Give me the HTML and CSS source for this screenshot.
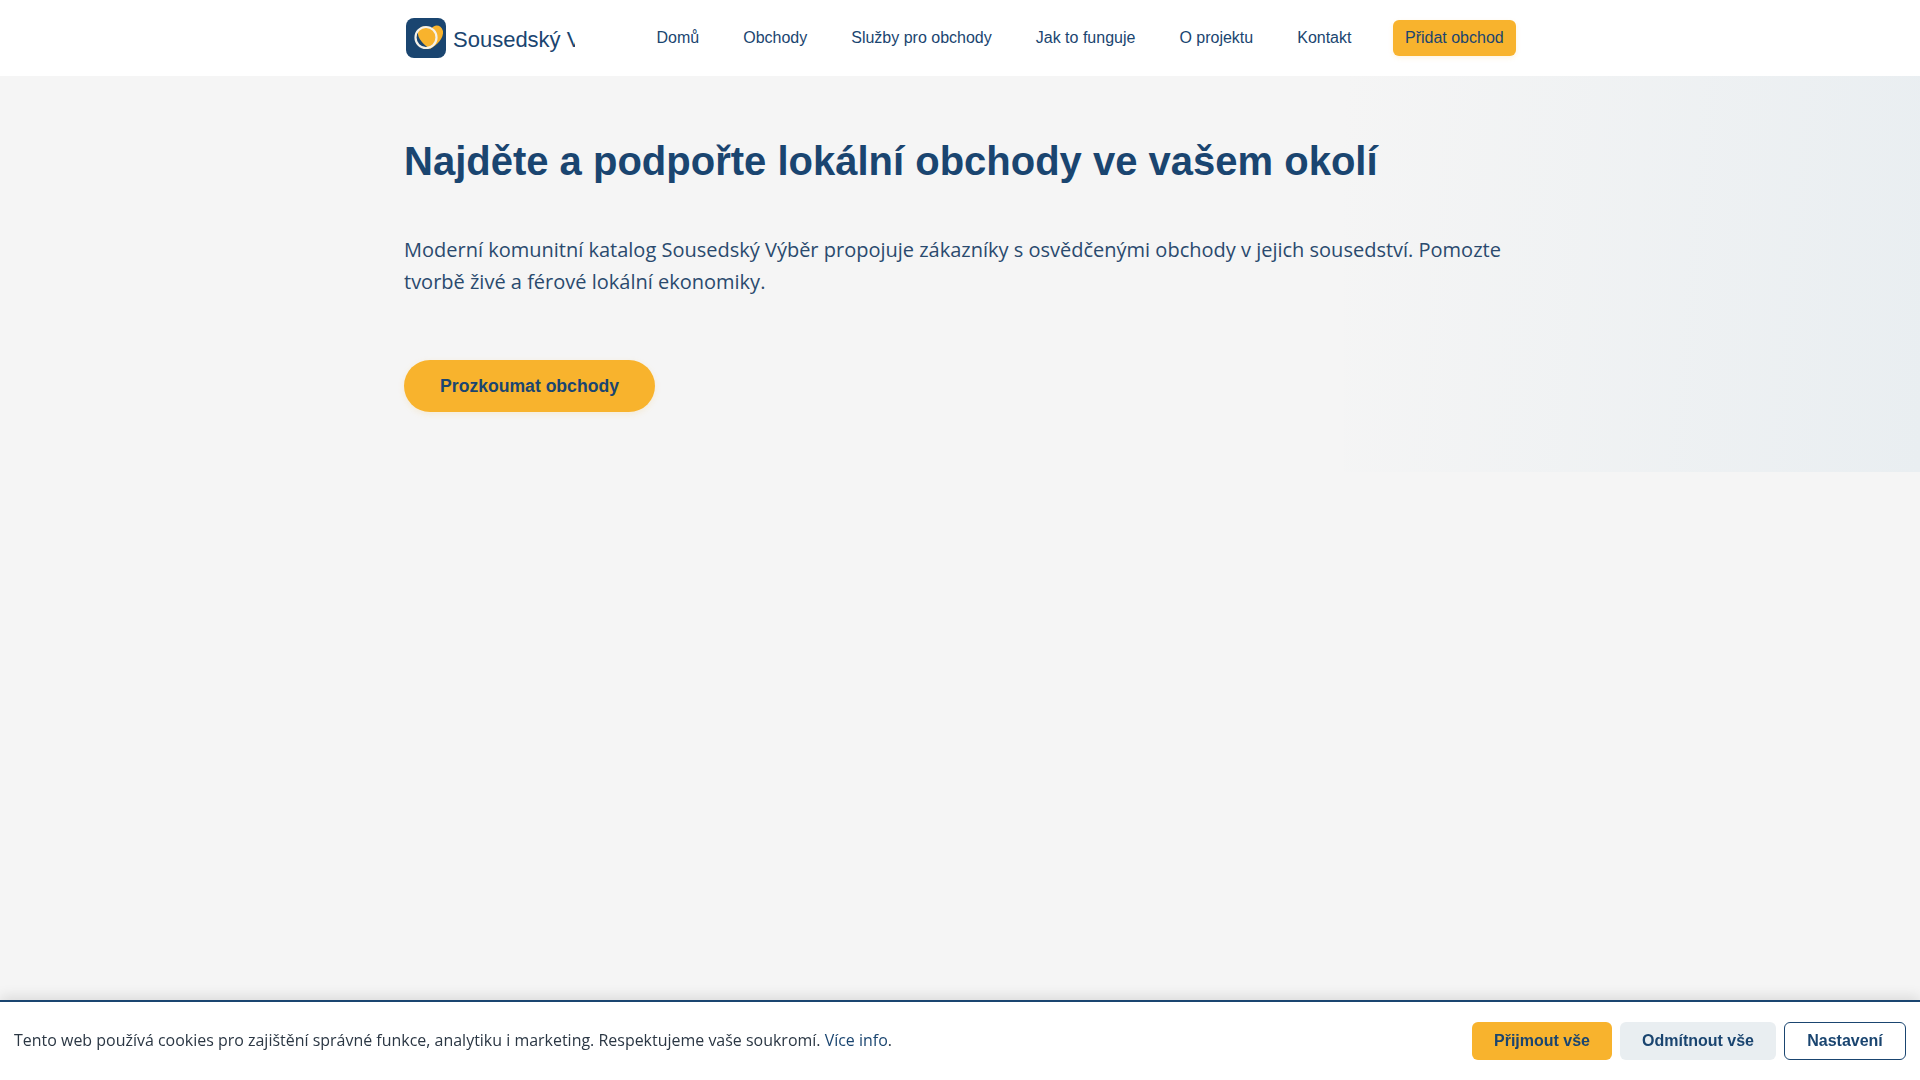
FILE: index.html
```html
<!DOCTYPE html>
<html lang="cs">
<head>
<meta charset="utf-8">
<title>Sousedský Výběr</title>
<link rel="stylesheet" href="styles.css">
</head>
<body>
<header class="site-header">
  <div class="header-inner">
    <a class="logo" href="#">
      <svg class="logo-icon" viewBox="0 0 40 40" width="40" height="40" aria-hidden="true">
        <rect width="40" height="40" rx="8" fill="#1a4570"/>
        <path d="M24 31 C18 27 11 20 12 14 C13 8 20 7 25 11 C28 6 35 6 37 13 C38 20 31 27 24 31 Z" fill="#f8b32d"/>
        <circle cx="20" cy="19.5" r="10.5" fill="none" stroke="#f5f1e8" stroke-width="2.2"/>
      </svg>
      <span class="logo-text">Sousedský Výběr</span>
    </a>
    <nav class="main-nav">
      <a href="#">Domů</a>
      <a href="#">Obchody</a>
      <a href="#">Služby pro obchody</a>
      <a href="#">Jak to funguje</a>
      <a href="#">O projektu</a>
      <a href="#">Kontakt</a>
      <a href="#" class="nav-cta">Přidat obchod</a>
    </nav>
  </div>
</header>
<main>
  <section class="hero">
    <div class="hero-inner">
      <h1>Najděte a podpořte lokální obchody ve vašem okolí</h1>
      <p>Moderní komunitní katalog Sousedský Výběr propojuje zákazníky s osvědčenými obchody v jejich sousedství. Pomozte tvorbě živé a férové lokální ekonomiky.</p>
      <a class="hero-btn" href="#">Prozkoumat obchody</a>
    </div>
  </section>
</main>
<aside class="cookie-bar">
  <p>Tento web používá cookies pro zajištění správné funkce, analytiku i marketing. Respektujeme vaše soukromí. <a href="#">Více info</a>.</p>
  <div class="cookie-actions">
    <button class="btn btn-accept">Přijmout vše</button>
    <button class="btn btn-reject">Odmítnout vše</button>
    <button class="btn btn-settings">Nastavení</button>
  </div>
</aside>
</body>
</html>
```
FILE: styles.css
```css
* { box-sizing: border-box; }
html, body { margin: 0; height: 100%; }
body { background: #f5f5f5; color: #1a4570; font-family: "Open Sans", sans-serif; overflow: hidden; }
a { text-decoration: none; color: inherit; }

.site-header { background: #fff; height: 76px; }
.header-inner { width: 1112px; margin: 0 auto; height: 100%; display: flex; align-items: center; }
.logo { display: flex; align-items: center; gap: 7px; width: 169px; margin-left: 2px; overflow: hidden; flex: none; }
.logo-icon { flex: none; }
.logo-text { font: 400 22px "Liberation Sans", sans-serif; white-space: nowrap; padding-top: 4px; }
.main-nav { display: flex; align-items: center; margin-left: 81.5px; font: 400 16px "Liberation Sans", sans-serif; gap: 44px; }
.nav-cta { background: #f8b32d; padding: 8px 12px; height: 36px; line-height: 20px; border-radius: 6px; margin-left: -2.5px; box-shadow: 0 2px 5px rgba(248,179,45,.15); }

.hero { position: relative; height: 396px; }
.hero::before { content: ""; position: absolute; top: 0; right: 0; bottom: 0; width: 30%; background: linear-gradient(95deg, #f5f5f5 0%, #e9eef1 100%); }
.hero-inner { position: relative; width: 1112px; margin: 0 auto; padding-top: 61px; }
h1 { margin: 0; font: 700 40px/48px "Liberation Sans", sans-serif; }
.hero p { margin: 49px 0 0; font-size: 20px; line-height: 32px; color: #2a4a6e; }
.hero-btn { display: inline-block; margin-top: 62px; width: 251px; height: 52px; text-align: center; background: #f8b32d; border-radius: 26px; font: 700 17.6px/52px "Liberation Sans", sans-serif; box-shadow: 0 2px 6px rgba(248,179,45,.15); }

.cookie-bar { position: fixed; left: 0; right: 0; bottom: 0; height: 80px; background: #fff; border-top: 2px solid #1a4570; box-shadow: 0 -4px 12px rgba(0,0,0,.1); display: flex; align-items: center; justify-content: space-between; padding: 0 14px; }
.cookie-bar p { margin: 0 0 2px; font-size: 15.97px; color: #2b3744; }
.cookie-bar p a { color: #1a4570; }
.cookie-actions { display: flex; gap: 8px; }
.btn { height: 38px; border: 0; border-radius: 6px; font: 700 16px "Liberation Sans", sans-serif; color: #1a4570; padding: 0; white-space: nowrap; }
.btn-accept { background: #f8b32d; width: 140px; }
.btn-reject { background: #e9eef1; width: 156px; }
.btn-settings { background: #fff; border: 1px solid #1a4570; width: 122px; }
```
